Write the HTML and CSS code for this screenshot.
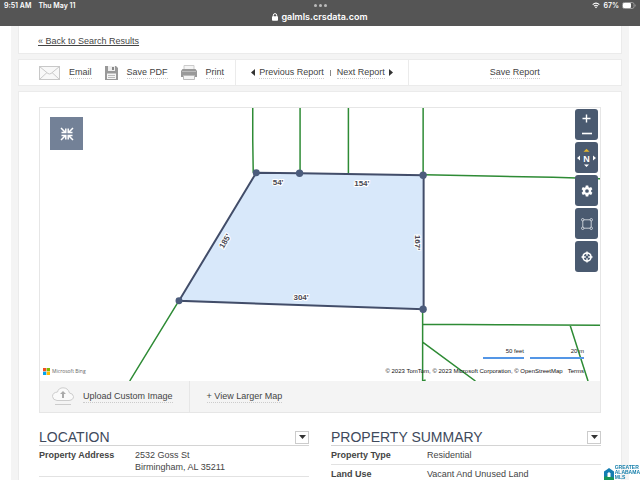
FILE: index.html
```html
<!DOCTYPE html>
<html lang="en">
<head>
<meta charset="utf-8">
<meta name="viewport" content="width=device-width, initial-scale=1">
<title>Property Report</title>
<link rel="stylesheet" href="styles.css">
</head>
<body>
<header class="browser">
  <div class="status">
    <div class="status-left"><span>9:51 AM</span><span>Thu May 11</span></div>
    <div class="dots"><i></i><i></i><i></i></div>
    <div class="status-right">
      <svg width="8" height="7" viewBox="0 0 18 14" aria-hidden="true"><g fill="none" stroke="#fff" stroke-width="2.4"><path d="M1.500 5.200Q9-1.700 16.500 5.200"/><path d="M4.500 8.500Q9 4.500 13.500 8.500"/></g><path d="M6.400 10.300Q9 8.500 11.600 10.300L9 13z" fill="#fff"/></svg>
      <span>67%</span>
      <svg width="14" height="7" viewBox="0 0 14 7" aria-hidden="true"><rect x=".5" y=".5" width="11.500" height="6" rx="1.800" fill="none" stroke="#999"/><rect x="1" y="1" width="8" height="5" rx="1" fill="#fff"/><path d="M13 2.500q.8 1 0 2z" fill="#999" stroke="#999" stroke-width=".5"/></svg>
    </div>
  </div>
  <div class="url">
    <svg width="6" height="8" viewBox="0 0 6 8" aria-hidden="true"><rect y="3.300" width="6" height="4.500" rx=".8" fill="#fff"/><path d="M1.300 4V2.300a1.700 1.700 0 0 1 3.400 0V4" fill="none" stroke="#fff"/></svg>
    <span>galmls.crsdata.com</span>
  </div>
</header>
<main class="page">
  <nav class="card back"><a href="#">« Back to Search Results</a></nav>
  <div class="card toolbar">
    <div class="actions">
      <svg width="21" height="14" viewBox="0 0 21 14" aria-hidden="true"><g fill="#f8f8f8" stroke="#c8c8c8"><rect x=".5" y=".5" width="20" height="13"/><path d="M.5.500l8.500 7q1.500 1 3 0l8.500-7M.5 13.500l7.500-7M20.500 13.500l-7.500-7" fill="none"/></g></svg>
      <a href="#">Email</a>
      <svg width="13" height="14" viewBox="0 0 13 14" aria-hidden="true"><path d="M0 0h11l2 2v12H0z" fill="#999"/><path d="M3 0h7v5H3z" fill="#eee"/><path d="M7 1h2v3H7z" fill="#888"/><path d="M2 7.500h9V13H2z" fill="#f5f5f5"/><path d="M3 9.500h7M3 11.500h7" stroke="#bbb"/></svg>
      <a href="#">Save PDF</a>
      <svg width="16" height="15" viewBox="0 0 16 15" aria-hidden="true"><path d="M3 .5h10V5H3z" fill="#f4f4f4" stroke="#ccc"/><path d="M1.500 4h13L16 6v6H0V6z" fill="#999"/><path d="M1 6.500h14" stroke="#bbb"/><path d="M2.500 10.500h11v4h-11z" fill="#f4f4f4" stroke="#bbb"/></svg>
      <a href="#">Print</a>
    </div>
    <div class="pager">
      <svg width="4" height="7" viewBox="0 0 4 7" aria-hidden="true"><path d="M4 0v7L0 3.500z" fill="#333"/></svg>
      <a href="#">Previous Report</a><span class="bar"></span><a href="#">Next Report</a>
      <svg width="4" height="7" viewBox="0 0 4 7" aria-hidden="true"><path d="M0 0v7l4-3.500z" fill="#333"/></svg>
    </div>
    <div class="save"><a href="#">Save Report</a></div>
  </div>
  <section class="card report">
    <div class="map-frame">
      <div class="map">
        <svg class="parcels" viewBox="39 108 562 274" role="img" aria-label="Parcel map">
          <g fill="none" stroke="#2e8b35" stroke-width="1.500">
            <path d="M252.500 108V140L253 173M300 108v65M348.500 108v66M423.500 108v67H425L500 176.500 554 177.500 601 179M178 302l-49 80M423 310v72l3-1M423 325l76 .5 102 .5M423 343l53 39M571 326l18 56"/>
          </g>
          <path d="M256 173l44 .5 124 2V310L178.500 301.500z" fill="#d8e8fa" stroke="#424d69" stroke-width="2"/>
          <g fill="#4c5c7c"><circle cx="256" cy="173" r="3.500"/><circle cx="299.500" cy="173.500" r="3.700"/><circle cx="423.500" cy="175.500" r="3.700"/><circle cx="423.500" cy="310" r="3.700"/><circle cx="178.500" cy="301.500" r="3.500"/></g>
          <g class="lengths">
            <text x="278" y="185">54'</text><text x="362" y="186">154'</text><text x="301" y="301">304'</text>
            <text transform="translate(227 243) rotate(-60)">185'</text><text transform="translate(415 243) rotate(90)">167'</text>
          </g>
        </svg>
        <button class="collapse" aria-label="Collapse map"><svg width="14" height="14" viewBox="0 0 14 14" aria-hidden="true"><g fill="none" stroke="#fff" stroke-width="1.500"><path d="M1 1l4.500 4.500M1.500 5.500h4.300V1.500M13 1L8.500 5.500M12.500 5.500H8.200V1.500M1 13l4.500-4.500M1.500 8.500h4.300v4M13 13L8.500 8.500M12.500 8.500H8.200v4"/></g></svg></button>
        <div class="controls">
          <div class="zoomer">
            <button aria-label="Zoom in"><svg width="9" height="9" viewBox="0 0 9 9" aria-hidden="true"><path d="M4.500 .5v8M.5 4.500h8" stroke="#fff" stroke-width="1.400"/></svg></button>
            <button aria-label="Zoom out"><svg width="10" height="3" viewBox="0 0 10 3" aria-hidden="true"><path d="M0 1.500h10" stroke="#fff" stroke-width="1.600"/></svg></button>
          </div>
          <button aria-label="Rotate map"><svg width="21" height="20" viewBox="0 0 21 20" aria-hidden="true"><path d="M7.500 3.800l3-3 3 3z" fill="#e2b42c"/><path d="M8 16.500h5l-2.500 2.500zM4 7.500v5L1 10zM17 7.500v5l3-2.500z" fill="#fff"/><text x="10.500" y="13.500">N</text></svg></button>
          <button aria-label="Map settings"><svg width="12" height="12" viewBox="0 0 24 24" aria-hidden="true"><path fill="#fff" fill-rule="evenodd" d="M9.500 1h5l.6 3.300 2 1.100L20.300 4l2.500 4.400-2.500 2.300v2.600l2.500 2.300-2.500 4.400-3.200-1.400-2 1.100-.6 3.300h-5l-.6-3.300-2-1.100L3.700 20l-2.500-4.400 2.500-2.300v-2.600L1.200 8.400 3.700 4l3.200 1.400 2-1.100zM12 8.300a3.700 3.700 0 1 0 0 7.400 3.700 3.700 0 0 0 0-7.400z"/></svg></button>
          <button aria-label="Select area"><svg width="12" height="12" viewBox="0 0 12 12" aria-hidden="true"><g fill="#4a5a70" stroke="#e4e8ee" stroke-width=".8"><path d="M1.800 1.800h8.400v8.400H1.800z"/><circle cx="1.700" cy="1.700" r="1.200"/><circle cx="10.300" cy="1.700" r="1.200"/><circle cx="1.700" cy="10.300" r="1.200"/><circle cx="10.300" cy="10.300" r="1.200"/></g></svg></button>
          <button aria-label="Locate"><svg width="12" height="12" viewBox="0 0 12 12" aria-hidden="true"><g fill="none" stroke="#fff"><circle cx="6" cy="6" r="4" stroke-width="1.600"/><path d="M6 .5v4.300M6 7.200v4.300M.5 6h4.300M7.200 6h4.300" stroke-width="1.400"/></g></svg></button>
        </div>
        <div class="bing">
          <svg width="7" height="7" viewBox="0 0 7 7" aria-hidden="true"><path d="M0 0h3.300v3.300H0z" fill="#f25022"/><path d="M3.700 0H7v3.300H3.700z" fill="#7fba00"/><path d="M0 3.700h3.300V7H0z" fill="#00a4ef"/><path d="M3.700 3.700H7V7H3.700z" fill="#ffb900"/></svg>
          <span>Microsoft Bing</span>
        </div>
        <div class="scales"><span class="feet">50 feet</span><span class="metres">20 m</span></div>
        <div class="credits"><span>© 2023 TomTom, © 2023 Microsoft Corporation, © OpenStreetMap</span><a href="#">Terms</a></div>
      </div>
      <div class="map-bar">
        <div class="upload">
          <svg width="22" height="19" viewBox="0 0 22 19" aria-hidden="true"><path d="M5 13.500H17Q21.500 13 21.500 9.500 21 6.500 17.500 6 16 .8 11 .8 6.500.800 5.500 5 .5 5.500.5 9.500.800 13 5 13.500z" fill="#fafafa" stroke="#ccc"/><path d="M11 4l3 3h-2v3h-2V7H8zM10 9h2v2h-2z" fill="#aaa"/><path d="M3 17.500h16" stroke="#ccc"/></svg>
          <a href="#">Upload Custom Image</a>
        </div>
        <div class="larger"><a href="#">+ View Larger Map</a></div>
      </div>
    </div>
    <div class="details">
      <section>
        <div class="heading"><h2>LOCATION</h2><button aria-label="Collapse location"><svg width="7" height="4" viewBox="0 0 7 4" aria-hidden="true"><path d="M0 0h7L3.500 4z" fill="#333"/></svg></button></div>
        <table><tr><th scope="row">Property Address</th><td>2532 Goss St<br>Birmingham, AL 35211</td></tr></table>
      </section>
      <section>
        <div class="heading"><h2>PROPERTY SUMMARY</h2><button aria-label="Collapse property summary"><svg width="7" height="4" viewBox="0 0 7 4" aria-hidden="true"><path d="M0 0h7L3.500 4z" fill="#333"/></svg></button></div>
        <table><tr><th scope="row">Property Type</th><td>Residential</td></tr><tr><th scope="row">Land Use</th><td>Vacant And Unused Land</td></tr></table>
      </section>
    </div>
  </section>
</main>
<div class="mls">
  <svg width="10" height="12" viewBox="0 0 10 12" aria-hidden="true"><path d="M0 3.500L3 1.500 5 0l5 3.500V12H0z" fill="#137db2"/><path d="M0 9q5-2.500 10 1v2H0z" fill="#18955a"/><path d="M3.500 9V5.500q1.500-2.500 3 0V9z" fill="#fff"/></svg>
  <div>GREATER<br>ALABAMA<br>MLS</div>
</div>
</body>
</html>
```
FILE: styles.css
```css
* { box-sizing: border-box; }

body {
  margin: 0;
  height: 100vh;
  overflow: hidden;
  display: flex;
  flex-direction: column;
  background: #fff;
  color: #444;
  font: 9px/12px "Liberation Sans", Arial, sans-serif;
}

svg { display: block; flex: none; }
a { color: inherit; text-decoration: none; }
button { padding: 0; border: 0; display: flex; align-items: center; justify-content: center; }

.browser {
  flex: none;
  height: 26px;
  background: #555;
  color: #fff;
  font-family: Inter, "Liberation Sans", sans-serif;
  font-weight: 600;
}
.status {
  display: grid;
  grid-template-columns: 1fr auto 1fr;
  align-items: center;
  height: 11px;
  padding: 0 4px;
  font-size: 7px;
  line-height: 11px;
}
.status-left { display: flex; gap: 7px; }
.status-right { display: flex; gap: 3px; align-items: center; justify-content: flex-end; }
.dots { display: flex; gap: 2px; }
.dots i { width: 3px; height: 3px; border-radius: 50%; background: #bbb; }
.url {
  display: flex;
  justify-content: center;
  align-items: center;
  gap: 3px;
  font-size: 9px;
  line-height: 11px;
}

.page {
  flex: 1 0 auto;
  display: flex;
  flex-direction: column;
  gap: 5px;
  margin: 0 11px;
  padding: 0 7px;
  background: #f4f4f4;
}
.card { background: #fff; border: 1px solid #ebebeb; }

.back { height: 28px; padding: 9px 19px; border-top: 0; }
.back a { text-decoration: underline; }

.toolbar {
  display: grid;
  grid-template-columns: 217fr 173fr 214fr;
  height: 27px;
}
.toolbar > div { display: flex; align-items: center; }
.toolbar > div + div { border-left: 1px solid #ebebeb; }
.toolbar a, .map-bar a { border-bottom: 1px dotted #ccc; }
.actions { gap: 9px; padding-left: 20px; }
.actions a + svg { margin-left: 4px; }
.pager { gap: 4px; justify-content: center; }
.bar { width: 1px; height: 6px; margin: 0 2px; background: #888; }
.save { justify-content: center; }

.report { flex: 1; padding: 15px 20px 0 20px; }
.map-frame { border: 1px solid #e6e6e6; }
.map { position: relative; overflow: hidden; }
.parcels { width: 100%; height: auto; }
.lengths {
  fill: #4a4a55;
  stroke: #fff;
  stroke-width: 2px;
  paint-order: stroke;
  text-anchor: middle;
  font: bold 8px "Liberation Sans", Arial, sans-serif;
}
.collapse {
  position: absolute;
  left: 10px;
  top: 9px;
  width: 33px;
  height: 33px;
  background: #738197;
}
.controls {
  position: absolute;
  right: 2px;
  top: 1px;
  display: grid;
  gap: 2px;
}
.controls > * {
  width: 23px;
  height: 31px;
  border-radius: 3px;
  background: #4a5a70;
}
.controls text { fill: #fff; text-anchor: middle; font: bold 9px "Liberation Sans", Arial, sans-serif; }
.zoomer { display: grid; }
.zoomer button { background: none; }
.bing {
  position: absolute;
  left: 3px;
  bottom: 6px;
  display: flex;
  align-items: center;
  gap: 2px;
  color: #666;
  font: 5px/8px "Open Sans", sans-serif;
}
.scales {
  position: absolute;
  right: 16px;
  bottom: 22px;
  display: flex;
  gap: 6px;
  color: #222;
  font-size: 6px;
  line-height: 12px;
  text-align: right;
}
.scales span { border-bottom: 2px solid #5496e6; }
.feet { width: 41px; }
.metres { width: 54px; }
.credits {
  position: absolute;
  right: 16px;
  bottom: 6px;
  display: flex;
  gap: 5px;
  color: #111;
  font-size: 6px;
  line-height: 8px;
}

.map-bar { display: flex; height: 31px; background: #f4f4f4; }
.map-bar > div { display: flex; align-items: center; }
.upload { gap: 9px; padding: 0 16px 0 12px; border-right: 1px solid #e6e6e6; }
.larger { padding-left: 17px; }

.details {
  display: grid;
  grid-template-columns: 1fr 1fr;
  gap: 22px;
  margin-top: 16px;
}
.heading {
  display: flex;
  align-items: center;
  justify-content: space-between;
  height: 17px;
  border-bottom: 1px solid #d4d4d4;
}
.heading h2 { margin: 0; color: #404a5c; font-size: 14px; line-height: 16px; font-weight: 400; }
.heading button { width: 14px; height: 13px; border: 1px solid #ccc; background: #fff; }
table { width: 100%; border-collapse: collapse; }
tr { border-bottom: 1px solid #e2e2e2; }
th, td { padding: 3px 0; text-align: left; vertical-align: top; }
th { width: 96px; }

.mls {
  position: fixed;
  right: 0;
  bottom: 0;
  display: flex;
  align-items: flex-end;
  gap: 1px;
  color: #157fab;
  font: bold 5px/5px "Liberation Sans", Arial, sans-serif;
}
```
